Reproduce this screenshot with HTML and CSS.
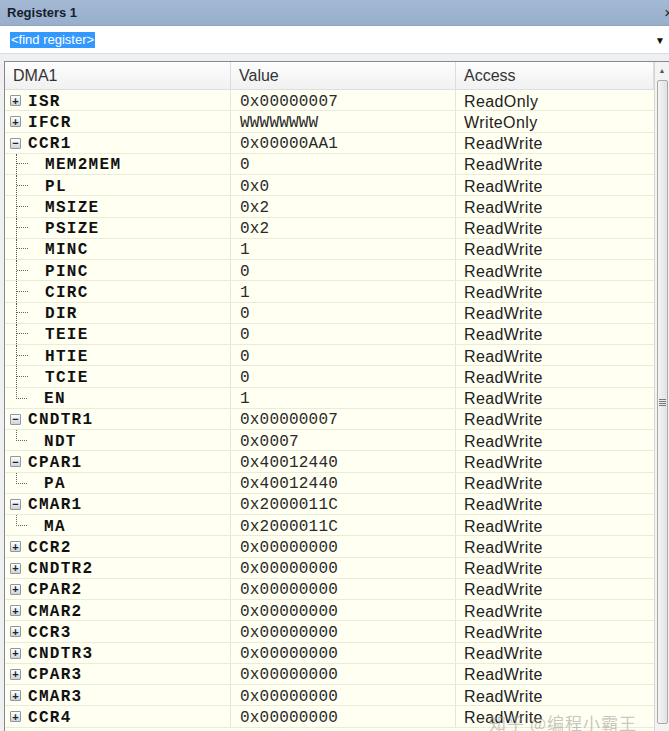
FILE: index.html
```html
<!DOCTYPE html>
<html lang="en">
<head>
  <meta charset="UTF-8">
  <title>Registers 1</title>
  <link rel="stylesheet" href="styles.css">
</head>
<body>
  <div class="titlebar">
    <span class="title">Registers 1</span>
    <span class="close">×</span>
  </div>
  <div class="findbar">
    <span class="find-text">&lt;find register&gt;</span>
    <span class="drop">&#9660;</span>
  </div>
  <div class="panel">
    <div class="grid">
      <div class="row head">
        <div class="cell">DMA1</div>
        <div class="cell">Value</div>
        <div class="cell">Access</div>
      </div>

      <div class="row"><div class="cell name"><span class="box">+</span>ISR</div><div class="cell val">0x00000007</div><div class="cell acc">ReadOnly</div></div>
      <div class="row"><div class="cell name"><span class="box">+</span>IFCR</div><div class="cell val">WWWWWWWW</div><div class="cell acc">WriteOnly</div></div>
      <div class="row"><div class="cell name"><span class="box">−</span>CCR1</div><div class="cell val">0x00000AA1</div><div class="cell acc">ReadWrite</div></div>
      <div class="row"><div class="cell name child"><span class="line"></span>MEM2MEM</div><div class="cell val">0</div><div class="cell acc">ReadWrite</div></div>
      <div class="row"><div class="cell name child"><span class="line"></span>PL</div><div class="cell val">0x0</div><div class="cell acc">ReadWrite</div></div>
      <div class="row"><div class="cell name child"><span class="line"></span>MSIZE</div><div class="cell val">0x2</div><div class="cell acc">ReadWrite</div></div>
      <div class="row"><div class="cell name child"><span class="line"></span>PSIZE</div><div class="cell val">0x2</div><div class="cell acc">ReadWrite</div></div>
      <div class="row"><div class="cell name child"><span class="line"></span>MINC</div><div class="cell val">1</div><div class="cell acc">ReadWrite</div></div>
      <div class="row"><div class="cell name child"><span class="line"></span>PINC</div><div class="cell val">0</div><div class="cell acc">ReadWrite</div></div>
      <div class="row"><div class="cell name child"><span class="line"></span>CIRC</div><div class="cell val">1</div><div class="cell acc">ReadWrite</div></div>
      <div class="row"><div class="cell name child"><span class="line"></span>DIR</div><div class="cell val">0</div><div class="cell acc">ReadWrite</div></div>
      <div class="row"><div class="cell name child"><span class="line"></span>TEIE</div><div class="cell val">0</div><div class="cell acc">ReadWrite</div></div>
      <div class="row"><div class="cell name child"><span class="line"></span>HTIE</div><div class="cell val">0</div><div class="cell acc">ReadWrite</div></div>
      <div class="row"><div class="cell name child"><span class="line"></span>TCIE</div><div class="cell val">0</div><div class="cell acc">ReadWrite</div></div>
      <div class="row"><div class="cell name child last"><span class="line"></span>EN</div><div class="cell val">1</div><div class="cell acc">ReadWrite</div></div>
      <div class="row"><div class="cell name"><span class="box">−</span>CNDTR1</div><div class="cell val">0x00000007</div><div class="cell acc">ReadWrite</div></div>
      <div class="row"><div class="cell name child last"><span class="line"></span>NDT</div><div class="cell val">0x0007</div><div class="cell acc">ReadWrite</div></div>
      <div class="row"><div class="cell name"><span class="box">−</span>CPAR1</div><div class="cell val">0x40012440</div><div class="cell acc">ReadWrite</div></div>
      <div class="row"><div class="cell name child last"><span class="line"></span>PA</div><div class="cell val">0x40012440</div><div class="cell acc">ReadWrite</div></div>
      <div class="row"><div class="cell name"><span class="box">−</span>CMAR1</div><div class="cell val">0x2000011C</div><div class="cell acc">ReadWrite</div></div>
      <div class="row"><div class="cell name child last"><span class="line"></span>MA</div><div class="cell val">0x2000011C</div><div class="cell acc">ReadWrite</div></div>
      <div class="row"><div class="cell name"><span class="box">+</span>CCR2</div><div class="cell val">0x00000000</div><div class="cell acc">ReadWrite</div></div>
      <div class="row"><div class="cell name"><span class="box">+</span>CNDTR2</div><div class="cell val">0x00000000</div><div class="cell acc">ReadWrite</div></div>
      <div class="row"><div class="cell name"><span class="box">+</span>CPAR2</div><div class="cell val">0x00000000</div><div class="cell acc">ReadWrite</div></div>
      <div class="row"><div class="cell name"><span class="box">+</span>CMAR2</div><div class="cell val">0x00000000</div><div class="cell acc">ReadWrite</div></div>
      <div class="row"><div class="cell name"><span class="box">+</span>CCR3</div><div class="cell val">0x00000000</div><div class="cell acc">ReadWrite</div></div>
      <div class="row"><div class="cell name"><span class="box">+</span>CNDTR3</div><div class="cell val">0x00000000</div><div class="cell acc">ReadWrite</div></div>
      <div class="row"><div class="cell name"><span class="box">+</span>CPAR3</div><div class="cell val">0x00000000</div><div class="cell acc">ReadWrite</div></div>
      <div class="row"><div class="cell name"><span class="box">+</span>CMAR3</div><div class="cell val">0x00000000</div><div class="cell acc">ReadWrite</div></div>
      <div class="row"><div class="cell name"><span class="box">+</span>CCR4</div><div class="cell val">0x00000000</div><div class="cell acc">ReadWrite</div></div>
    </div>
    <div class="scrollbar">
      <div class="arrow up">&#9650;</div>
      <div class="thumb"><span class="grip"></span></div>
      <div class="arrow down">&#9660;</div>
    </div>
    <div class="watermark">知乎 @编程小霸王</div>
  </div>
</body>
</html>
```

FILE: styles.css
```css
body {
  margin: 0;
  width: 669px;
  height: 731px;
  overflow: hidden;
  background: #eef0f2;
  font-family: "Liberation Sans", Arial, sans-serif;
  color: #222;
}

.titlebar {
  height: 25px;
  background: linear-gradient(#a3b8d3, #98afcc);
  display: flex;
  align-items: center;
  justify-content: space-between;
  padding: 0 0 0 7px;
  border-bottom: 1px solid #8ea3bd;
}

.title {
  font-size: 13px;
  font-weight: bold;
  color: #15202c;
}

.close {
  font-size: 15px;
  color: #222;
  margin-right: -4px;
}

.findbar {
  height: 26px;
  background: #fff;
  display: flex;
  align-items: center;
  justify-content: space-between;
  padding: 1px 4px 0 10px;
  border-bottom: 1px solid #d8dde3;
}

.find-text {
  background: #3399ff;
  color: #fff;
  font-size: 13px;
  line-height: 16px;
  padding: 0 1px;
}

.drop {
  font-size: 10px;
  color: #111;
}

.panel {
  position: relative;
  display: flex;
  margin: 7px 0 0 4px;
  border-top: 1px solid #888;
  border-left: 1px solid #888;
  height: 680px;
}

.grid {
  flex: 1;
  background: #fffff2;
}

.row {
  display: grid;
  grid-template-columns: 226px 225px 1fr;
  height: 21.25px;
  box-sizing: border-box;
  border-bottom: 1px solid #ebebdc;
}

.row.head {
  height: 28px;
  background: linear-gradient(#fdfdfd, #f1f1f1);
  border-bottom: 1px solid #dedede;
}

.cell {
  display: flex;
  align-items: center;
  box-sizing: border-box;
  padding-top: 3px;
  border-right: 1px solid #e6e6d8;
  white-space: nowrap;
  overflow: hidden;
}

.head .cell {
  font-size: 16px;
  color: #333;
  padding: 1px 0 0 8px;
  border-right-color: #dcdcdc;
}

.name {
  font-family: "Liberation Mono", "DejaVu Sans Mono", monospace;
  font-weight: bold;
  font-size: 16px;
  letter-spacing: 1.3px;
  color: #111;
  padding-left: 5px;
}

.box {
  width: 9px;
  height: 9px;
  margin: -2px 7px 0 0;
  border: 1px solid #8d98a3;
  border-radius: 1px;
  background: linear-gradient(#ffffff, #cfd4d9);
  font-family: "Liberation Sans", Arial, sans-serif;
  font-size: 11px;
  line-height: 8px;
  letter-spacing: 0;
  color: #222;
  font-weight: bold;
  display: flex;
  align-items: center;
  justify-content: center;
}

.child {
  padding-left: 11px;
  height: 100%;
}

.line {
  align-self: stretch;
  width: 12px;
  margin: -3px 16px 0 0;
  border-left: 1px dotted #555;
  background: linear-gradient(to right, #666 50%, transparent 50%) left center / 2px 1px repeat-x;
}

.last .line {
  border-left: none;
  align-self: flex-start;
  height: 11px;
  background:
    linear-gradient(to right, #666 50%, transparent 50%) left bottom / 2px 1px repeat-x,
    linear-gradient(#666 50%, transparent 50%) left top / 1px 2px repeat-y;
}

.val {
  font-family: "Liberation Mono", "DejaVu Sans Mono", monospace;
  font-size: 16px;
  letter-spacing: 0.2px;
  color: #2a2a2a;
  padding-left: 9px;
}

.acc {
  font-size: 16px;
  letter-spacing: 0.4px;
  color: #222;
  padding-left: 8px;
  border-right: none;
}

.scrollbar {
  width: 14px;
  background: #f3f3f3;
  border-left: 1px solid #d6d6d6;
  display: flex;
  flex-direction: column;
}

.arrow {
  height: 16px;
  font-size: 7px;
  color: #555;
  display: flex;
  align-items: center;
  justify-content: center;
}

.thumb {
  flex: 1;
  margin: 2px 1px 2px 2px;
  border: 1px solid #a9a9a9;
  border-radius: 2px;
  background: linear-gradient(to right, #f4f4f4, #e2e2e2);
  display: flex;
  align-items: center;
  justify-content: center;
}

.grip {
  width: 7px;
  height: 7px;
  background: repeating-linear-gradient(#777 0 1px, transparent 1px 2px);
}

.watermark {
  position: absolute;
  right: 32px;
  bottom: 7px;
  font-family: "Noto Sans CJK SC", sans-serif;
  font-size: 17px;
  color: rgba(150, 150, 150, 0.55);
  letter-spacing: 1px;
}
```
